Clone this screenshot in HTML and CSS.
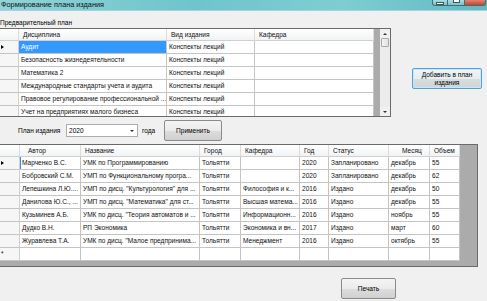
FILE: index.html
```html
<!DOCTYPE html>
<html>
  <head>
    <title>Формирование плана издания</title>
    <link rel="stylesheet" href="styles.css">
  </head>
  <body>
    <div class="window">
      <div class="titlebar">
        <div class="title">Формирование плана издания</div>
        <div class="caption-buttons">
          <div class="cap-btn cap-min"><span class="glyph-min"></span></div>
          <div class="cap-btn cap-max"><span class="glyph-max"></span></div>
          <div class="cap-btn cap-close"></div>
        </div>
      </div>

      <div class="client">
        <div class="top-area">
          <div class="plan-box">
            <div class="group-label">Предварительный план</div>
            <div class="grid grid-top">
              <table class="data">
                <tr class="head">
                  <th class="rowhead w19"></th>
                  <th class="w148">Дисциплина</th>
                  <th class="w88">Вид издания</th>
                  <th class="w119">Кафедра</th>
                </tr>
                <tr>
                  <td class="rowhead"><span class="cur"></span></td>
                  <td class="selected">Аудит</td>
                  <td>Конспекты лекций</td>
                  <td></td>
                </tr>
                <tr>
                  <td class="rowhead"></td>
                  <td>Безопасность жизнедеятельности</td>
                  <td>Конспекты лекций</td>
                  <td></td>
                </tr>
                <tr>
                  <td class="rowhead"></td>
                  <td>Математика 2</td>
                  <td>Конспекты лекций</td>
                  <td></td>
                </tr>
                <tr>
                  <td class="rowhead"></td>
                  <td>Международные стандарты учета и аудита</td>
                  <td>Конспекты лекций</td>
                  <td></td>
                </tr>
                <tr>
                  <td class="rowhead"></td>
                  <td>Правовое регулирование профессиональной ...</td>
                  <td>Конспекты лекций</td>
                  <td></td>
                </tr>
                <tr>
                  <td class="rowhead"></td>
                  <td>Учет на предприятиях малого бизнеса</td>
                  <td>Конспекты лекций</td>
                  <td></td>
                </tr>
              </table>
              <div class="vscroll">
                <div class="sb-arrow"><span class="tri-up"></span></div>
                <div class="sb-thumb"></div>
                <div class="sb-track"></div>
                <div class="sb-arrow"><span class="tri-down"></span></div>
              </div>
            </div>
          </div>
          <button class="btn btn-add">Добавить в план<br>издания</button>
        </div>

        <div class="plan-row">
          <span class="lbl lbl-plan">План издания</span>
          <div class="combo">
            <span>2020</span>
            <span class="tri-down"></span>
          </div>
          <span class="lbl lbl-year">года</span>
          <button class="btn btn-apply">Применить</button>
        </div>

        <div class="grid grid-bottom">
          <table class="data">
            <tr class="head">
              <th class="rowhead w20"></th>
              <th class="w61 pad6">Автор</th>
              <th class="w119">Название</th>
              <th class="w41">Город</th>
              <th class="w59">Кафедра</th>
              <th class="w29">Год</th>
              <th class="w60">Статус</th>
              <th class="w41 pad13">Месяц</th>
              <th class="w30">Объем</th>
            </tr>
            <tr>
              <td class="rowhead"><span class="cur"></span></td>
              <td class="focus">Марченко В.С.</td>
              <td>УМК по Программированию</td>
              <td>Тольятти</td>
              <td></td>
              <td>2020</td>
              <td>Запланировано</td>
              <td>декабрь</td>
              <td>55</td>
            </tr>
            <tr>
              <td class="rowhead"></td>
              <td>Бобровский С.М.</td>
              <td>УМП по Функциональному програ...</td>
              <td>Тольятти</td>
              <td></td>
              <td>2020</td>
              <td>Запланировано</td>
              <td>декабрь</td>
              <td>62</td>
            </tr>
            <tr>
              <td class="rowhead"></td>
              <td>Лепешкина Л.Ю....</td>
              <td>УМП по дисц. "Культурология" для ...</td>
              <td>Тольятти</td>
              <td>Философия и к...</td>
              <td>2016</td>
              <td>Издано</td>
              <td>декабрь</td>
              <td>50</td>
            </tr>
            <tr>
              <td class="rowhead"></td>
              <td>Данилова Ю.С., ...</td>
              <td>УМП по дисц. "Математика" для ст...</td>
              <td>Тольятти</td>
              <td>Высшая матема...</td>
              <td>2016</td>
              <td>Издано</td>
              <td>декабрь</td>
              <td>55</td>
            </tr>
            <tr>
              <td class="rowhead"></td>
              <td>Кузьминев А.Б.</td>
              <td>УМК по дисц. "Теория автоматов и ...</td>
              <td>Тольятти</td>
              <td>Информационн...</td>
              <td>2016</td>
              <td>Издано</td>
              <td>ноябрь</td>
              <td>55</td>
            </tr>
            <tr>
              <td class="rowhead"></td>
              <td>Дудко В.Н.</td>
              <td>РП Экономика</td>
              <td>Тольятти</td>
              <td>Экономика и вн...</td>
              <td>2017</td>
              <td>Издано</td>
              <td>март</td>
              <td>60</td>
            </tr>
            <tr>
              <td class="rowhead"></td>
              <td>Журавлева Т.А.</td>
              <td>УМК по дисц. "Малое предпринима...</td>
              <td>Тольятти</td>
              <td>Менеджмент</td>
              <td>2016</td>
              <td>Издано</td>
              <td>октябрь</td>
              <td>55</td>
            </tr>
            <tr>
              <td class="rowhead newrow">*</td>
              <td></td>
              <td></td>
              <td></td>
              <td></td>
              <td></td>
              <td></td>
              <td></td>
              <td></td>
            </tr>
          </table>
        </div>

        <div class="print-row">
          <button class="btn btn-print">Печать</button>
        </div>
      </div>
    </div>
  </body>
</html>
```

FILE: styles.css
```css
body {
  margin: 0;
  background: #f0f0f0;
  font-family: "Liberation Sans", Arial, sans-serif;
  font-size: 6.55px;
  color: #000;
  overflow: hidden;
}
.window {
  width: 487px;
  height: 301px;
  overflow: hidden;
}

/* title bar */
.titlebar {
  height: 10px;
  display: flex;
  justify-content: space-between;
  background: linear-gradient(90deg, #8fd3d8, #6fc4cb 40%, #7fcdd3 70%, #62b9c1);
  border-bottom: 1px solid #9fd6da;
}
.title {
  font-size: 7.3px;
  line-height: 9px;
  padding-left: 1px;
  color: #111;
}
.caption-buttons {
  display: flex;
  align-items: flex-start;
  margin-right: 1px;
}
.cap-btn {
  height: 5px;
  border: 1px solid #3f6f74;
  border-top: none;
  display: flex;
  justify-content: center;
  align-items: flex-start;
}
.cap-min {
  width: 14px;
  border-radius: 0 0 0 3px;
  background: linear-gradient(#a9dbe0, #79c2c9);
}
.cap-max {
  width: 16px;
  border-left: none;
  background: linear-gradient(#a9dbe0, #79c2c9);
}
.cap-close {
  width: 20px;
  border-left: none;
  border-radius: 0 0 3px 0;
  background: linear-gradient(#e0836f, #c7432f);
}
.glyph-min {
  width: 6px;
  height: 1px;
  margin-top: 2px;
  background: #fff;
  border: 1px solid #3a5a5e;
}
.glyph-max {
  width: 5px;
  height: 2px;
  border: 1px solid #3a5a5e;
  border-top: none;
  background: #fff;
}

/* top part */
.top-area {
  display: flex;
  align-items: flex-start;
}
.plan-box {
  margin-left: -1px;
  width: 392px;
}
.group-label {
  height: 17px;
  padding-top: 7px;
  box-sizing: border-box;
  line-height: 10px;
  padding-left: 1px;
}
.grid {
  box-sizing: border-box;
  border: 1px solid #6a6a6a;
  background: #ababab;
  overflow: hidden;
  display: flex;
  justify-content: space-between;
  align-items: flex-start;
}
.grid-top {
  height: 89px;
}
.grid-bottom {
  margin-left: -1px;
  width: 479px;
  height: 123px;
}

/* data tables */
.data {
  border-collapse: separate;
  border-spacing: 0;
  table-layout: fixed;
  background: #fff;
}
.data th,
.data td {
  box-sizing: border-box;
  padding: 0 0 0 2px;
  line-height: 12px;
  border-right: 1px solid #c4c4c4;
  border-bottom: 1px solid #c4c4c4;
  white-space: nowrap;
  overflow: hidden;
  text-align: left;
  font-weight: normal;
  background: #fff;
  color: #111;
}
.data .head th {
  line-height: 11px;
  padding-left: 4px;
  background: linear-gradient(#ffffff, #f2f3f5);
  border-right-color: #dcdcdc;
  border-bottom-color: #d0d0d0;
}
.data .head th.pad6 { padding-left: 8px; }
.data .head th.pad13 { padding-left: 13px; }
.data .rowhead {
  padding-left: 1px;
  background: #f6f6f6;
  border-right-color: #cfcfcf;
}
.data td.selected {
  background: #3399ff;
  color: #fff;
}
.data td.focus {
  box-shadow: inset 1px 0 0 #3d8ee0;
}
.newrow {
  line-height: 14px;
}
.cur {
  display: inline-block;
  width: 0;
  height: 0;
  border-left: 3px solid #000;
  border-top: 2px solid transparent;
  border-bottom: 2px solid transparent;
  vertical-align: middle;
}

.w19 { width: 19px; }
.w20 { width: 20px; }
.w29 { width: 29px; }
.w30 { width: 30px; }
.w41 { width: 41px; }
.w59 { width: 59px; }
.w60 { width: 60px; }
.w61 { width: 61px; }
.w88 { width: 88px; }
.w119 { width: 119px; }
.w148 { width: 148px; }
.grid-top .data { width: 374px; }
.grid-bottom .data { width: 460px; }

/* scrollbar */
.vscroll {
  width: 10px;
  height: 87px;
  display: flex;
  flex-direction: column;
  background: #ececec;
}
.sb-arrow {
  height: 9px;
  display: flex;
  justify-content: center;
  align-items: center;
  background: #f0f0f0;
}
.sb-thumb {
  height: 9px;
  margin: 0 1px;
  box-sizing: border-box;
  border: 1px solid #a9a9a9;
  border-radius: 1px;
  background: linear-gradient(90deg, #f4f4f4, #e2e2e2);
}
.sb-track {
  flex: 1;
}
.tri-up {
  width: 0;
  height: 0;
  border-bottom: 2px solid #333;
  border-left: 2px solid transparent;
  border-right: 2px solid transparent;
}
.tri-down {
  width: 0;
  height: 0;
  border-top: 2px solid #333;
  border-left: 2px solid transparent;
  border-right: 2px solid transparent;
}

/* buttons */
.btn {
  font-family: "Liberation Sans", Arial, sans-serif;
  font-size: 6.55px;
  color: #000;
  box-sizing: border-box;
  border: 1px solid #8a8a8a;
  border-radius: 2px;
  background: linear-gradient(#f4f4f4 0%, #ebebeb 50%, #dddddd 51%, #d0d0d0 100%);
  padding: 0;
}
.btn-add {
  margin-left: 21px;
  margin-top: 57px;
  width: 70px;
  height: 21px;
  line-height: 8px;
  border-color: #4da3d8;
  box-shadow: inset 0 0 0 1px #c8e6f7;
  background: linear-gradient(#f1f5f8 0%, #e7ecef 50%, #d8dde0 51%, #cfd4d7 100%);
}

/* plan row */
.plan-row {
  height: 27px;
  display: flex;
  align-items: center;
  padding-left: 18px;
}
.lbl-plan { width: 48px; }
.combo {
  width: 72px;
  height: 13px;
  box-sizing: border-box;
  border: 1px solid #abadb3;
  background: #fff;
  display: flex;
  justify-content: space-between;
  align-items: center;
  padding: 0 3px 0 2px;
}
.lbl-year {
  margin-left: 4px;
  width: 22px;
}
.btn-apply {
  width: 58px;
  height: 21px;
}

/* print */
.print-row {
  padding: 11px 0 0 341px;
}
.btn-print {
  width: 55px;
  height: 21px;
}
```
